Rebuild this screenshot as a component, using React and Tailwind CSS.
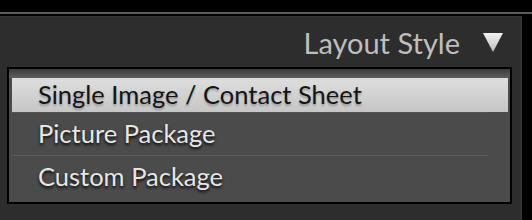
export default function App() {
  const items = ["Picture Package", "Custom Package"];

  return (
    <div className="w-[532px] h-[220px] bg-black overflow-hidden" style={{ fontFamily: "Lato, 'Open Sans', sans-serif" }}>
      <div className="h-[12px]" />
      <div className="h-[2px] bg-[#5b5b5b]" />
      <div className="h-[2px]" />
      <div className="w-[522px] h-[204px] bg-[#2d2d2d] border-r border-[#3a3a3a] border-t border-t-[#333333]">
        {/* header */}
        <div className="h-[50px] flex items-center justify-end pr-[17px]">
          <span className="text-[29px] text-[#bebebe] leading-none mr-[22px]">Layout Style</span>
          <svg width="22" height="21" viewBox="0 0 22 21">
            <defs>
              <linearGradient id="tri" x1="0" y1="0" x2="0" y2="1">
                <stop offset="0" stopColor="#f2f2f2" />
                <stop offset="1" stopColor="#bdbdbd" />
              </linearGradient>
            </defs>
            <path d="M1 1 L21 1 L11 20 Z" fill="url(#tri)" />
          </svg>
        </div>

        {/* list box */}
        <div className="ml-[7px] w-[505px] h-[137px] border-2 border-black bg-[#4b4b4b] px-[3px] pr-[2px] flex flex-col">
          <div className="h-[9px] bg-gradient-to-b from-[#3c3c3c] to-[#5e5e5e] -mx-[3px] -mr-[2px]" />
          <div className="h-[34px] bg-gradient-to-b from-[#dedede] to-[#c6c6c6] flex items-center pl-[26px]">
            <span className="text-[25.5px] text-[#151515] leading-none [text-shadow:0_2px_2px_rgba(0,0,0,0.25)]">
              Single Image / Contact Sheet
            </span>
          </div>
          <div className="h-px bg-[#555555] mr-[20px]" />
          {items.map((label, i) => (
            <div key={label}>
              <div className="h-[42px] flex items-center pl-[26px]">
                <span className="text-[25.5px] text-[#e6e6e6] leading-none [text-shadow:0_2px_3px_rgba(0,0,0,0.9)]">
                  {label}
                </span>
              </div>
              {i === 0 && <div className="h-px bg-[#5c5c5c] mr-[20px]" />}
            </div>
          ))}
        </div>
      </div>
    </div>
  );
}
